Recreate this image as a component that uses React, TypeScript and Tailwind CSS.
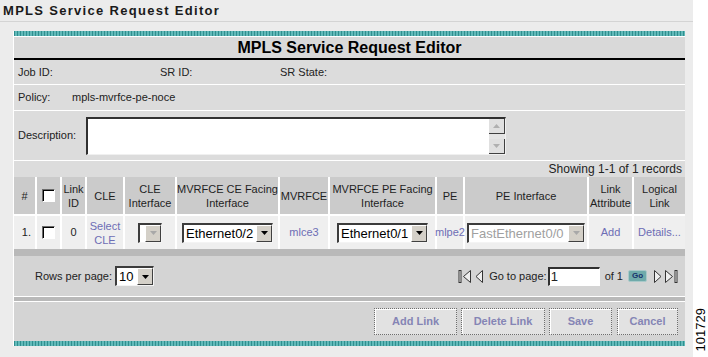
import React from "react";

const LINK = "text-[#6d6db5]";

function Arrow({ disabled }: { disabled?: boolean }) {
  return (
    <span className="flex h-full w-[16px] items-center justify-center border-t border-l border-t-white border-l-white border-r border-b border-r-[#404040] border-b-[#404040] bg-[#d4d0c8]">
      <svg width="7" height="4" viewBox="0 0 7 4">
        <polygon points="0,0 7,0 3.5,4" fill={disabled ? "#a8a8a8" : "#000"} />
      </svg>
    </span>
  );
}

function Dropdown({
  value,
  className,
  disabled,
}: {
  value: string;
  className: string;
  disabled?: boolean;
}) {
  return (
    <div
      className={`flex h-[20px] border-t-2 border-l-2 border-t-[#3c3c3c] border-l-[#3c3c3c] border-b border-r border-b-[#f4f4f4] border-r-[#f4f4f4] bg-white ${className}`}
    >
      <span
        className={`flex-1 overflow-hidden whitespace-nowrap pl-[2px] text-left text-[13px] leading-[17px] ${
          disabled ? "text-[#a0a0a0]" : "text-black"
        }`}
      >
        {value}
      </span>
      <Arrow disabled={disabled} />
    </div>
  );
}

function Check() {
  return (
    <span className="inline-block h-[13px] w-[13px] border-t border-l border-t-[#6a6a6a] border-l-[#6a6a6a] border-b border-r border-b-white border-r-white bg-white shadow-[inset_1px_1px_0_#000]" />
  );
}

function PageIcon({ dir, bar }: { dir: "l" | "r"; bar?: boolean }) {
  const w = bar ? 14 : 9;
  return (
    <svg width={w} height="15" viewBox={`0 0 ${w} 15`}>
      {dir === "l" ? (
        <>
          {bar && <rect x="1" y="1.5" width="2" height="12" fill="#eee" stroke="#333" />}
          <polygon
            points={bar ? "12.5,1.5 5.5,7.5 12.5,13.5" : "7.5,1.5 1,7.5 7.5,13.5"}
            fill="#eee"
            stroke="#333"
          />
        </>
      ) : (
        <>
          <polygon
            points={bar ? "1.5,1.5 8.5,7.5 1.5,13.5" : "1.5,1.5 8,7.5 1.5,13.5"}
            fill="#eee"
            stroke="#333"
          />
          {bar && <rect x="11" y="1.5" width="2" height="12" fill="#eee" stroke="#333" />}
        </>
      )}
    </svg>
  );
}

function Btn({ label, className }: { label: string; className: string }) {
  return (
    <button
      className={`h-[27px] border border-dotted border-[#6e6e6e] bg-[#e2e2e2] text-[11px] font-bold text-[#8585b5] shadow-[inset_1px_1px_0_#fff] ${className}`}
    >
      {label}
    </button>
  );
}

const TEAL =
  "h-[5px] bg-[repeating-linear-gradient(90deg,#2f8f8f_0px,#2f8f8f_1px,#62b9b9_1px,#62b9b9_3px)]";

const headers = [
  ["#"],
  ["cb"],
  ["Link", "ID"],
  ["CLE"],
  ["CLE", "Interface"],
  ["MVRFCE CE Facing", "Interface"],
  ["MVRFCE"],
  ["MVRFCE PE Facing", "Interface"],
  ["PE"],
  ["PE Interface"],
  ["Link", "Attribute"],
  ["Logical", "Link"],
];

export default function App() {
  return (
    <div className="flex h-[357px] w-[708px] overflow-hidden bg-white font-['Liberation_Sans',Arial,sans-serif] text-[11px] text-[#222]">
      <div className="flex w-[693px] flex-col bg-[#ececec]">
        <div className="flex h-[22px] items-center border-b border-[#d4d4d4] pl-[3px] text-[13px] font-bold tracking-[1.3px] text-[#1a1a1a]">
          MPLS Service Request Editor
        </div>

        <div className="pl-[13px] pr-[8px] pt-[9px]">
          <div className="flex flex-col border-l border-white">
            <div className={TEAL} />
            <div className="flex h-[24px] items-center justify-center border-t border-white border-b-2 border-b-black bg-[#d9d9d9] text-[16px] font-bold text-black">
              MPLS Service Request Editor
            </div>

            {/* job / sr */}
            <div className="flex h-[25px] items-center border-b border-white bg-[#dcdcdc] pl-[4px]">
              <span className="w-[142px]">Job ID:</span>
              <span className="w-[120px]">SR ID:</span>
              <span>SR State:</span>
            </div>
            <div className="flex h-[26px] items-center border-b border-white bg-[#dcdcdc] pl-[4px]">
              <span className="w-[54px]">Policy:</span>
              <span>mpls-mvrfce-pe-noce</span>
            </div>
            <div className="flex h-[50px] items-center border-b border-white bg-[#dcdcdc] pl-[4px]">
              <span className="w-[68px]">Description:</span>
              <div className="flex h-[38px] w-[420px] border-t-2 border-l-2 border-t-[#303030] border-l-[#303030] border-b border-r border-b-[#f0f0f0] border-r-[#f0f0f0] bg-white">
                <div className="flex-1" />
                <div className="flex w-[16px] flex-col justify-between bg-[#e4e4e4]">
                  <span className="flex h-[15px] items-center justify-center border-r border-b border-r-[#404040] border-b-[#404040] bg-[#e0e0e0]">
                    <svg width="7" height="4" viewBox="0 0 7 4">
                      <polygon points="3.5,0 7,4 0,4" fill="#b0b0b0" />
                    </svg>
                  </span>
                  <span className="flex h-[15px] items-center justify-center border-r border-b border-r-[#404040] border-b-[#404040] bg-[#e0e0e0]">
                    <svg width="7" height="4" viewBox="0 0 7 4">
                      <polygon points="0,0 7,0 3.5,4" fill="#b0b0b0" />
                    </svg>
                  </span>
                </div>
              </div>
            </div>
            <div className="flex h-[16px] items-center justify-end bg-[#dcdcdc] pr-[3px] text-[12px]">
              Showing 1-1 of 1 records
            </div>

            {/* table */}
            <div className="grid grid-cols-[21px_23px_23px_36px_50px_101px_48px_105px_26px_122px_43px_51px] gap-x-[2px] gap-y-[2px] bg-white">
              {headers.map((h, i) => (
                <div
                  key={i}
                  className="flex h-[37px] flex-col items-center justify-center bg-[#cbcbcb] text-center leading-[14px] text-[#1e1e1e]"
                >
                  {h[0] === "cb" ? (
                    <Check />
                  ) : (
                    h.map((l) => <span key={l} className="whitespace-nowrap">{l}</span>)
                  )}
                </div>
              ))}

              <div className="flex h-[33px] items-center justify-end bg-[#efefef] pr-[4px]">1.</div>
              <div className="flex items-center justify-center bg-[#efefef]">
                <Check />
              </div>
              <div className="flex items-center justify-center bg-[#efefef]">0</div>
              <div className={`flex flex-col items-center justify-center bg-[#efefef] leading-[14px] ${LINK}`}>
                <span>Select</span>
                <span>CLE</span>
              </div>
              <div className="flex items-center justify-center bg-[#efefef]">
                <Dropdown value="" className="w-[24px]" disabled />
              </div>
              <div className="flex items-center justify-center bg-[#efefef]">
                <Dropdown value="Ethernet0/2" className="w-[91px]" />
              </div>
              <div className={`flex items-center justify-center bg-[#efefef] ${LINK}`}>mlce3</div>
              <div className="flex items-center justify-center bg-[#efefef]">
                <Dropdown value="Ethernet0/1" className="w-[91px]" />
              </div>
              <div className={`flex items-center justify-center bg-[#efefef] ${LINK}`}>mlpe2</div>
              <div className="flex items-center justify-center bg-[#efefef]">
                <Dropdown value="FastEthernet0/0" className="w-[118px]" disabled />
              </div>
              <div className={`flex items-center justify-center bg-[#efefef] ${LINK}`}>Add</div>
              <div className={`flex items-center justify-center bg-[#efefef] ${LINK}`}>Details...</div>
            </div>

            <div className="h-[7px] bg-[#b9b9b9]" />

            {/* paging */}
            <div className="flex h-[40px] items-center justify-between bg-[#d4d4d4] pl-[21px] pr-[7px]">
              <div className="flex items-center gap-[3px]">
                <span>Rows per page:</span>
                <Dropdown value="10" className="w-[39px]" />
              </div>
              <div className="flex items-center">
                <PageIcon dir="l" bar />
                <span className="ml-[3px]">
                  <PageIcon dir="l" />
                </span>
                <span className="ml-[5px] mr-[1px]">Go to page:</span>
                <div className="flex h-[19px] w-[52px] items-center border-t-2 border-l-2 border-t-[#303030] border-l-[#303030] border-b border-r border-b-white border-r-white bg-white pl-[1px] text-[13px]">
                  1
                </div>
                <span className="ml-[5px]">of 1</span>
                <span className="ml-[5px] flex h-[12px] w-[19px] items-center justify-center rounded-[2px] border border-[#a9c9c9] bg-[#6faaaa] text-[8px] font-bold text-[#16306a]">
                  Go
                </span>
                <span className="ml-[6px]">
                  <PageIcon dir="r" />
                </span>
                <span className="ml-[2px]">
                  <PageIcon dir="r" bar />
                </span>
              </div>
            </div>

            <div className="h-[6px] border-y border-white bg-[#b9b9b9]" />

            {/* buttons */}
            <div className="flex h-[39px] items-center justify-end gap-[4px] bg-[#d4d4d4] pr-[7px]">
              <Btn label="Add Link" className="w-[83px]" />
              <Btn label="Delete Link" className="w-[84px]" />
              <Btn label="Save" className="w-[63px]" />
              <Btn label="Cancel" className="ml-[1px] w-[61px]" />
            </div>
            <div className={TEAL} />
          </div>
        </div>
      </div>

      <div className="flex flex-1 items-end justify-center pb-[6px]">
        <span className="rotate-180 text-[13px] leading-[15px] text-black [writing-mode:vertical-rl]">
          101729
        </span>
      </div>
    </div>
  );
}
